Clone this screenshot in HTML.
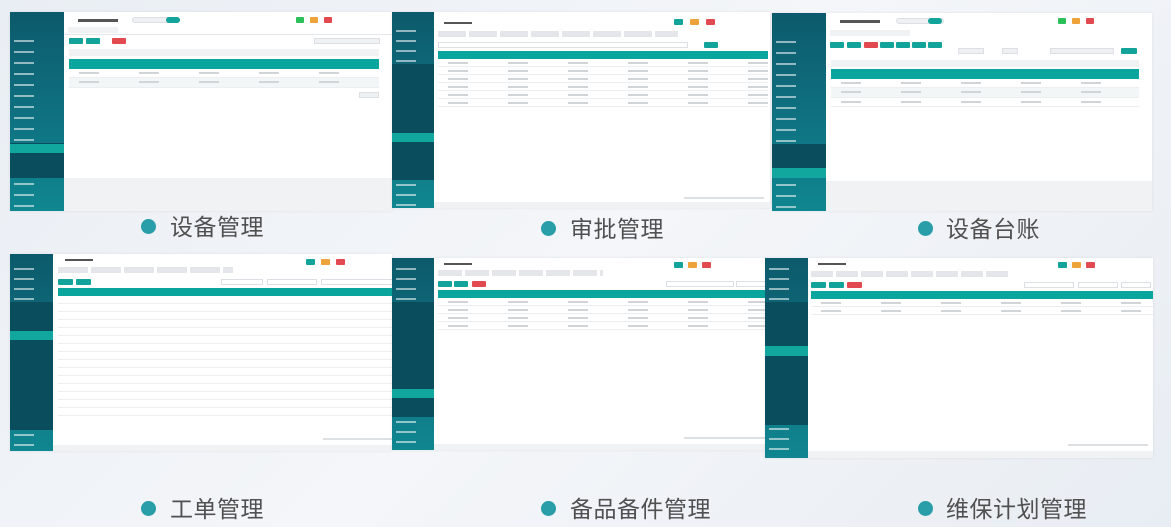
<!DOCTYPE html>
<html><head><meta charset="utf-8">
<style>
*{margin:0;padding:0;box-sizing:border-box}
body{width:1171px;height:527px;overflow:hidden;position:relative;background:linear-gradient(135deg,#e9eef4 0%,#f4f6f9 50%,#e8edf3 100%);font-family:"Liberation Sans","Noto Sans CJK SC",sans-serif}
.t{position:absolute;background:#fff;overflow:hidden;box-shadow:0 0 3px rgba(0,0,0,.08)}
.sb{position:absolute;left:0;top:0;bottom:0;background:linear-gradient(180deg,#0c5a6b 0%,#0f7080 50%,#0f8690 100%)}
.sb i{position:absolute;left:4px;height:2px;background:rgba(255,255,255,.55);width:20px}
.sub{position:absolute;left:0;right:0;background:#0a4d5c}
.act{position:absolute;left:0;right:0;background:#12a79e}
.c{position:absolute;top:0;bottom:0;right:0;background:#fff}
.bar{position:absolute;height:2px;background:#c4c8cc}
.dk{background:#555}
.th{position:absolute;background:#0aa69e}
.row{position:absolute;border-bottom:1px solid #eceeef;background-image:repeating-linear-gradient(90deg,transparent 0 10px,#d2d5d8 10px 30px,transparent 30px 60px);background-size:100% 2px;background-repeat:no-repeat;background-position:0 3px}
.btn{position:absolute;height:6px;border-radius:1px}
.g{background:#12a39a}.r{background:#e34a4f}.o{background:#eea23a}.gr{background:#2cc05a}
.gray{position:absolute;background:#f1f2f4}
.inp{position:absolute;height:6px;border:1px solid #dcdfe3;background:#fff}
.cap{position:absolute;font-size:23px;color:#505050;letter-spacing:0.5px;line-height:28px}
.dot{position:absolute;width:15px;height:15px;border-radius:50%;background:#2a9ea8}
</style></head><body>

<!-- Thumb 1 -->
<div class="t" style="left:10px;top:12px;width:382px;height:199px">
 <div class="sb" style="width:54px">
  <i style="top:28px"></i><i style="top:39px"></i><i style="top:50px"></i><i style="top:61px"></i><i style="top:72px"></i><i style="top:83px"></i><i style="top:94px"></i><i style="top:105px"></i><i style="top:116px"></i><i style="top:127px"></i>
  <div class="sub" style="top:131px;height:35px"></div>
  <div class="act" style="top:132px;height:9px"></div>
  <i style="top:171px"></i><i style="top:182px"></i><i style="top:193px"></i>
 </div>
 <div class="c" style="left:54px">
  <div class="bar dk" style="left:14px;top:7px;width:40px;height:3px"></div>
  <div class="inp" style="left:68px;top:5px;width:48px;border-radius:4px;background:#eef0f2"></div>
  <div class="btn g" style="left:102px;top:5px;width:14px;border-radius:4px"></div>
  <div class="btn gr" style="left:232px;top:5px;width:8px"></div><div class="btn o" style="left:246px;top:5px;width:8px"></div><div class="btn r" style="left:260px;top:5px;width:8px"></div>
  <div class="gray" style="left:4px;top:15px;width:50px;height:6px"></div>
  <div class="gray" style="left:0;top:22px;width:328px;height:1px;background:#e5e7ea"></div>
  <div class="btn g" style="left:5px;top:26px;width:14px"></div><div class="btn g" style="left:22px;top:26px;width:14px"></div><div class="btn r" style="left:48px;top:26px;width:14px"></div>
  <div class="inp" style="left:250px;top:26px;width:66px;background:#f0f1f3"></div>
  <div class="gray" style="left:5px;top:37px;width:310px;height:7px"></div>
  <div class="th" style="left:5px;top:47px;width:310px;height:10px"></div>
  <div class="row" style="left:5px;top:57px;width:310px;height:9px"></div>
  <div class="row" style="left:5px;top:66px;width:310px;height:10px;background-color:#f3f6f6"></div>
  <div class="inp" style="left:295px;top:80px;width:20px;background:#eef0f2"></div>
  <div class="gray" style="left:0;top:166px;width:328px;height:33px"></div>
 </div>
</div>

<!-- Thumb 2 -->
<div class="t" style="left:392px;top:12px;width:378px;height:196px">
 <div class="sb" style="width:42px">
  <i style="top:18px"></i><i style="top:28px"></i><i style="top:38px"></i><i style="top:48px"></i>
  <div class="sub" style="top:52px;height:116px"></div>
  <div class="act" style="top:121px;height:9px"></div>
  <i style="top:172px"></i><i style="top:182px"></i><i style="top:192px"></i>
 </div>
 <div class="c" style="left:42px">
  <div class="bar dk" style="left:10px;top:10px;width:28px"></div>
  <div class="btn g" style="left:240px;top:7px;width:9px"></div><div class="btn o" style="left:256px;top:7px;width:9px"></div><div class="btn r" style="left:272px;top:7px;width:9px"></div>
  <div class="inp" style="left:4px;top:19px;width:240px;border:none;background:repeating-linear-gradient(90deg,#e4e6e9 0 28px,#fff 28px 31px)"></div>
  <div class="inp" style="left:4px;top:30px;width:250px"></div>
  <div class="btn g" style="left:270px;top:30px;width:14px"></div>
  <div class="th" style="left:4px;top:39px;width:330px;height:8px"></div>
  <div class="row" style="left:4px;top:47px;width:330px;height:8px"></div><div class="row" style="left:4px;top:55px;width:330px;height:8px"></div><div class="row" style="left:4px;top:63px;width:330px;height:8px"></div><div class="row" style="left:4px;top:71px;width:330px;height:8px"></div><div class="row" style="left:4px;top:79px;width:330px;height:8px"></div><div class="row" style="left:4px;top:87px;width:330px;height:8px"></div>
  <div class="bar" style="left:250px;top:185px;width:80px;background:#dde0e3"></div>
  <div class="gray" style="left:0;top:190px;width:336px;height:6px"></div>
 </div>
</div>

<!-- Thumb 3 -->
<div class="t" style="left:772px;top:13px;width:380px;height:198px">
 <div class="sb" style="width:54px">
  <i style="top:28px"></i><i style="top:39px"></i><i style="top:50px"></i><i style="top:61px"></i><i style="top:72px"></i><i style="top:83px"></i><i style="top:94px"></i><i style="top:105px"></i><i style="top:116px"></i><i style="top:127px"></i>
  <div class="sub" style="top:131px;height:34px"></div>
  <div class="act" style="top:155px;height:10px"></div>
  <i style="top:171px"></i><i style="top:182px"></i><i style="top:193px"></i>
 </div>
 <div class="c" style="left:54px">
  <div class="bar dk" style="left:14px;top:7px;width:40px;height:3px"></div>
  <div class="inp" style="left:70px;top:5px;width:48px;border-radius:4px;background:#eef0f2"></div>
  <div class="btn g" style="left:102px;top:5px;width:14px;border-radius:4px"></div>
  <div class="btn gr" style="left:232px;top:5px;width:8px"></div><div class="btn o" style="left:246px;top:5px;width:8px"></div><div class="btn r" style="left:260px;top:5px;width:8px"></div>
  <div class="gray" style="left:4px;top:17px;width:80px;height:6px"></div>
  <div class="btn g" style="left:4px;top:29px;width:14px"></div><div class="btn g" style="left:21px;top:29px;width:14px"></div><div class="btn r" style="left:38px;top:29px;width:14px"></div><div class="btn g" style="left:54px;top:29px;width:14px"></div><div class="btn g" style="left:70px;top:29px;width:14px"></div><div class="btn g" style="left:86px;top:29px;width:14px"></div><div class="btn g" style="left:102px;top:29px;width:14px"></div>
  <div class="inp" style="left:132px;top:35px;width:26px;background:#eef0f2"></div><div class="inp" style="left:176px;top:35px;width:16px;background:#eef0f2"></div><div class="inp" style="left:224px;top:35px;width:64px;background:#eef0f2"></div>
  <div class="btn g" style="left:295px;top:35px;width:16px"></div>
  <div class="gray" style="left:5px;top:47px;width:308px;height:7px"></div>
  <div class="th" style="left:5px;top:56px;width:308px;height:10px"></div>
  <div class="row" style="left:5px;top:66px;width:308px;height:9px"></div><div class="row" style="left:5px;top:75px;width:308px;height:10px;background-color:#f3f6f6"></div><div class="row" style="left:5px;top:85px;width:308px;height:9px"></div>
  <div class="gray" style="left:0;top:168px;width:326px;height:30px"></div>
 </div>
</div>

<!-- Thumb 4 -->
<div class="t" style="left:10px;top:254px;width:382px;height:197px">
 <div class="sb" style="width:43px">
  <i style="top:14px"></i><i style="top:24px"></i><i style="top:34px"></i><i style="top:44px"></i>
  <div class="sub" style="top:48px;height:128px"></div>
  <div class="act" style="top:77px;height:9px"></div>
  <i style="top:180px"></i><i style="top:190px"></i>
 </div>
 <div class="c" style="left:43px">
  <div class="bar dk" style="left:12px;top:5px;width:28px"></div>
  <div class="btn g" style="left:253px;top:5px;width:9px"></div><div class="btn o" style="left:268px;top:5px;width:9px"></div><div class="btn r" style="left:283px;top:5px;width:9px"></div>
  <div class="inp" style="left:5px;top:13px;width:175px;border:none;background:repeating-linear-gradient(90deg,#e4e6e9 0 30px,#fff 30px 33px)"></div>
  <div class="btn g" style="left:5px;top:25px;width:15px"></div><div class="btn g" style="left:23px;top:25px;width:15px"></div>
  <div class="inp" style="left:168px;top:25px;width:42px"></div><div class="inp" style="left:214px;top:25px;width:50px"></div><div class="inp" style="left:268px;top:25px;width:78px"></div>
  <div class="th" style="left:5px;top:34px;width:342px;height:8px"></div>
  <div style="position:absolute;left:5px;top:42px;width:342px;height:120px;background:repeating-linear-gradient(180deg,#fff 0 7px,#eceeef 7px 8px)"></div>
  <div class="bar" style="left:270px;top:184px;width:75px;background:#dde0e3"></div>
  <div class="gray" style="left:0;top:191px;width:340px;height:6px"></div>
 </div>
</div>

<!-- Thumb 5 -->
<div class="t" style="left:392px;top:258px;width:376px;height:192px">
 <div class="sb" style="width:42px">
  <i style="top:10px"></i><i style="top:20px"></i><i style="top:30px"></i><i style="top:40px"></i>
  <div class="sub" style="top:44px;height:115px"></div>
  <div class="act" style="top:131px;height:9px"></div>
  <i style="top:163px"></i><i style="top:173px"></i><i style="top:183px"></i>
 </div>
 <div class="c" style="left:42px">
  <div class="bar dk" style="left:10px;top:5px;width:28px"></div>
  <div class="btn g" style="left:240px;top:4px;width:9px"></div><div class="btn o" style="left:254px;top:4px;width:9px"></div><div class="btn r" style="left:268px;top:4px;width:9px"></div>
  <div class="inp" style="left:4px;top:12px;width:165px;border:none;background:repeating-linear-gradient(90deg,#e4e6e9 0 24px,#fff 24px 27px)"></div>
  <div class="btn g" style="left:4px;top:23px;width:14px"></div><div class="btn g" style="left:20px;top:23px;width:14px"></div><div class="btn r" style="left:38px;top:23px;width:14px"></div>
  <div class="inp" style="left:232px;top:23px;width:68px"></div><div class="inp" style="left:302px;top:23px;width:38px"></div>
  <div class="th" style="left:4px;top:32px;width:336px;height:8px"></div>
  <div class="row" style="left:4px;top:40px;width:336px;height:8px"></div><div class="row" style="left:4px;top:48px;width:336px;height:8px"></div><div class="row" style="left:4px;top:56px;width:336px;height:8px"></div><div class="row" style="left:4px;top:64px;width:336px;height:8px"></div>
  <div class="bar" style="left:250px;top:179px;width:85px;background:#dde0e3"></div>
  <div class="gray" style="left:0;top:186px;width:334px;height:6px"></div>
 </div>
</div>

<!-- Thumb 6 -->
<div class="t" style="left:765px;top:258px;width:388px;height:200px">
 <div class="sb" style="width:43px">
  <i style="top:10px"></i><i style="top:20px"></i><i style="top:30px"></i><i style="top:40px"></i>
  <div class="sub" style="top:44px;height:123px"></div>
  <div class="act" style="top:88px;height:10px"></div>
  <i style="top:170px"></i><i style="top:180px"></i><i style="top:190px"></i>
 </div>
 <div class="c" style="left:43px">
  <div class="bar dk" style="left:10px;top:5px;width:28px"></div>
  <div class="btn g" style="left:250px;top:4px;width:9px"></div><div class="btn o" style="left:264px;top:4px;width:9px"></div><div class="btn r" style="left:278px;top:4px;width:9px"></div>
  <div class="inp" style="left:3px;top:13px;width:200px;border:none;background:repeating-linear-gradient(90deg,#e4e6e9 0 22px,#fff 22px 25px)"></div>
  <div class="btn g" style="left:3px;top:24px;width:15px"></div><div class="btn g" style="left:21px;top:24px;width:15px"></div><div class="btn r" style="left:39px;top:24px;width:15px"></div>
  <div class="inp" style="left:216px;top:24px;width:50px"></div><div class="inp" style="left:270px;top:24px;width:40px"></div><div class="inp" style="left:313px;top:24px;width:30px"></div>
  <div class="th" style="left:3px;top:33px;width:342px;height:8px"></div>
  <div class="row" style="left:3px;top:41px;width:342px;height:8px"></div><div class="row" style="left:3px;top:49px;width:342px;height:8px"></div>
  <div class="bar" style="left:260px;top:186px;width:80px;background:#dde0e3"></div>
  <div class="gray" style="left:0;top:193px;width:345px;height:7px"></div>
 </div>
</div>

<!-- Captions -->
<div class="dot" style="left:141px;top:219px"></div><div class="cap" style="left:170px;top:213px">设备管理</div>
<div class="dot" style="left:541px;top:221px"></div><div class="cap" style="left:570px;top:215px">审批管理</div>
<div class="dot" style="left:918px;top:221px"></div><div class="cap" style="left:946px;top:215px">设备台账</div>
<div class="dot" style="left:141px;top:501px"></div><div class="cap" style="left:170px;top:495px">工单管理</div>
<div class="dot" style="left:541px;top:501px"></div><div class="cap" style="left:570px;top:495px">备品备件管理</div>
<div class="dot" style="left:918px;top:501px"></div><div class="cap" style="left:946px;top:495px">维保计划管理</div>
</body></html>
